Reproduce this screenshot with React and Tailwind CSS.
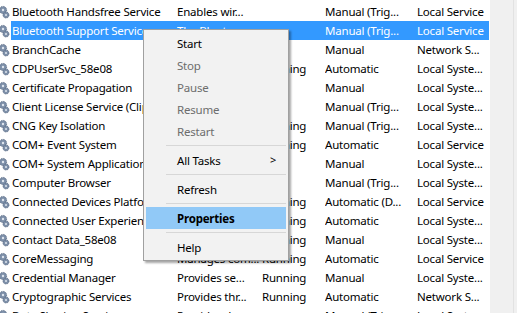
import React from 'react';

const rows = [
  ['Bluetooth Handsfree Service', 'Enables wir...', '', 'Manual (Trig...', 'Local Service'],
  ['Bluetooth Support Service', 'The Bluet...', '', 'Manual (Trig...', 'Local Service'],
  ['BranchCache', 'This service ...', '', 'Manual', 'Network S...'],
  ['CDPUserSvc_58e08', '<Failed to R...', 'Running', 'Automatic', 'Local Syste...'],
  ['Certificate Propagation', 'Copies user ...', '', 'Manual', 'Local Syste...'],
  ['Client License Service (ClipSVC)', 'Provides inf...', '', 'Manual (Trig...', 'Local Syste...'],
  ['CNG Key Isolation', 'The CNG ke...', 'Running', 'Manual (Trig...', 'Local Syste...'],
  ['COM+ Event System', 'Supports Sy...', 'Running', 'Automatic', 'Local Service'],
  ['COM+ System Application', 'Manages th...', '', 'Manual', 'Local Syste...'],
  ['Computer Browser', 'Maintains a...', '', 'Manual (Trig...', 'Local Syste...'],
  ['Connected Devices Platform Service', 'This service ...', 'Running', 'Automatic (D...', 'Local Service'],
  ['Connected User Experiences and Telemetry', 'The Connec...', 'Running', 'Automatic', 'Local Syste...'],
  ['Contact Data_58e08', 'Indexes co...', 'Running', 'Manual', 'Local Syste...'],
  ['CoreMessaging', 'Manages com...', 'Running', 'Automatic', 'Local Service'],
  ['Credential Manager', 'Provides se...', 'Running', 'Manual', 'Local Syste...'],
  ['Cryptographic Services', 'Provides thr...', 'Running', 'Automatic', 'Network S...'],
  ['Data Sharing Service', 'Provides da...', '', 'Manual (Trig...', 'Local Syste...'],
];

const GearIcon = () => (
  <svg width="12" height="14" viewBox="0 0 12 14" className="shrink-0 -ml-[2px]">
    <g fill="#7d8fa8" stroke="#4e607a" strokeWidth="0.8">
      <circle cx="5" cy="5" r="3.6" strokeDasharray="1.4 1" />
      <circle cx="8" cy="10" r="3" strokeDasharray="1.2 0.9" />
    </g>
    <circle cx="5" cy="5" r="1.2" fill="#dfe6ef" />
    <circle cx="8" cy="10" r="1" fill="#dfe6ef" />
  </svg>
);

const Row = ({ r, selected }) => (
  <div className="flex h-[19px] items-center">
    <div className="w-[11px] flex items-center overflow-hidden">
      <GearIcon />
    </div>
    <div className={`flex h-full w-[478px] items-center ${selected ? 'bg-[#3399ff] text-white' : 'text-black'}`}>
      <div className="w-[161px] mr-[4px] ml-[1px] overflow-hidden whitespace-nowrap">{r[0]}</div>
      <div className="w-[85px] overflow-hidden whitespace-nowrap">{r[1]}</div>
      <div className="w-[63px] overflow-hidden whitespace-nowrap">{r[2]}</div>
      <div className="w-[92px] overflow-hidden whitespace-nowrap">{r[3]}</div>
      <div className="flex-1 overflow-hidden whitespace-nowrap">{r[4]}</div>
    </div>
  </div>
);

const MenuItem = ({ label, disabled, bold, active, arrow }) => (
  <div
    className={`mx-[2px] flex h-[22px] items-center pl-[31px] pr-[10px] pt-[1px] ${active ? 'bg-[#91c9f7]' : ''} ${disabled ? 'text-[#6d6d6d]' : 'text-black'} ${bold ? 'font-bold' : ''}`}
  >
    <span className="flex-1">{label}</span>
    {arrow && <span className="text-[11px]">&gt;</span>}
  </div>
);

const Sep = () => (
  <div className="flex h-[7px] items-center pl-[22px] pr-[2px]">
    <div className="h-px w-full bg-[#d7d7d7]" />
  </div>
);

export default function App() {
  return (
    <div
      className="relative flex h-[313px] w-[517px] overflow-hidden bg-white text-[11.5px] tracking-[-0.2px]"
      style={{ fontFamily: '"Noto Sans", "Open Sans", sans-serif' }}
    >
      <div className="w-[490px] pt-[2px]">
        {rows.map((r, i) => (
          <Row key={i} r={r} selected={i === 1} />
        ))}
      </div>
      <div className="flex flex-1 bg-[#f0f0f0]">
        <div className="ml-auto mr-[3px] w-px bg-[#e2e2e2]" />
      </div>

      {/* context menu */}
      <div className="absolute left-[143px] top-[29px] w-[146px] border border-[#a0a0a0] bg-[#f2f2f2] py-[2px] shadow-[2px_2px_2px_rgba(0,0,0,0.35)]">
        <MenuItem label="Start" />
        <MenuItem label="Stop" disabled />
        <MenuItem label="Pause" disabled />
        <MenuItem label="Resume" disabled />
        <MenuItem label="Restart" disabled />
        <Sep />
        <MenuItem label="All Tasks" arrow />
        <Sep />
        <MenuItem label="Refresh" />
        <Sep />
        <MenuItem label="Properties" bold active />
        <Sep />
        <MenuItem label="Help" />
      </div>
    </div>
  );
}
